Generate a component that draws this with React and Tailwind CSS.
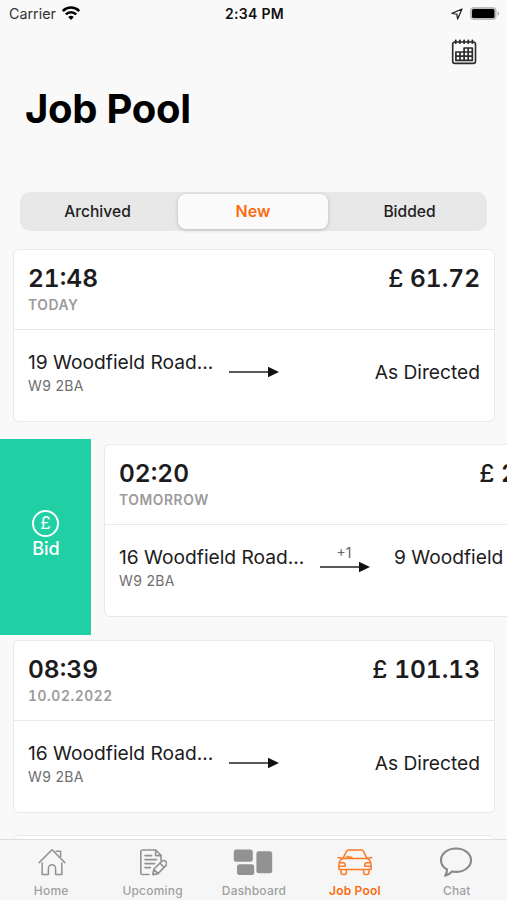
import React from 'react';

function StatusBar() {
  return (
    <div className="flex h-[28px] shrink-0 items-center justify-between pl-[9px] pr-[7px] text-[14px] text-[#111]">
      <div className="flex w-[150px] items-center gap-[6px]">
        <span className="text-[14.3px] text-[#333]">Carrier</span>
        <svg className="mt-[-2px]" width="18" height="14" viewBox="0 0 18 14" fill="none" stroke="#000" strokeWidth="2.5">
          <path d="M0.8 5a11.600 11.600 0 0 1 16.400 0" />
          <path d="M3.800 8.400a7.300 7.300 0 0 1 10.400 0" />
          <path d="M9 14L6.200 11a4 4 0 0 1 5.600 0z" fill="#000" stroke="none" />
        </svg>
      </div>
      <span className="mt-[-2px] text-[14px] font-semibold tracking-[0.3px]">2:34 PM</span>
      <div className="flex w-[150px] items-center justify-end gap-[6px]">
        <svg width="12" height="12" viewBox="0 0 12 12" fill="none" stroke="#222" strokeWidth="1.3" strokeLinejoin="round">
          <path d="M11 1L1 5.400l4.800.8L6.600 11z" />
        </svg>
        <svg className="mt-[-2px]" width="31" height="15" viewBox="0 0 31 15">
          <rect x="1" y="0.9" width="26.6" height="13" rx="4" fill="#bdbdbd" />
          <rect x="3" y="3" width="22.4" height="9" rx="1.6" fill="#000" />
          <path d="M28.600 5.200a2.500 2.500 0 0 1 0 4.600z" fill="#aaa" />
        </svg>
      </div>
    </div>
  );
}

function CalendarIcon() {
  return (
    <svg width="26" height="26" viewBox="0 0 26 26" fill="none" stroke="#2b2b2b">
      <rect x="1.7" y="3" width="22.8" height="21.4" rx="2.2" strokeWidth="1.6" />
      <path d="M4.700 1.400v2.600M8.900 1.400v2.600M13.100 1.400v2.600M17.300 1.400v2.600M21.400 1.400v2.600" strokeWidth="1.9" strokeLinecap="round" />
      <path d="M4.900 13h8.200V9h8.200v12.400H4.900zM4.900 17.200h16.400M13.100 13h8.200M9 13v8.400M13.100 13v8.400M17.200 9v12.400" strokeWidth="1.7" strokeLinejoin="round" />
    </svg>
  );
}

function SegmentedControl() {
  return (
    <div className="mx-[20px] flex h-[39px] shrink-0 items-stretch rounded-[10px] bg-[#e8e8e8] p-[2px] text-[15.6px] font-medium text-[#222]">
      <div className="flex w-[151px] items-center justify-center">Archived</div>
      <div className="ml-[5px] flex w-[150px] items-center justify-center rounded-[8px] bg-[#fafafa] pb-px text-[16px] font-semibold text-[#fb6d10] shadow-[0_1px_4px_rgba(0,0,0,0.2)]">
        New
      </div>
      <div className="ml-[6px] flex w-[151px] items-center justify-center">Bidded</div>
    </div>
  );
}

function Arrow() {
  return (
    <svg width="50" height="12" viewBox="0 0 50 12">
      <path d="M0 6h40" stroke="#222" strokeWidth="1.3" />
      <path d="M39 0.700L50 6l-11 5.300z" fill="#111" />
    </svg>
  );
}

function JobCard({ time, day, price, from, to, stops }) {
  return (
    <div className="flex h-[173px] w-[482px] shrink-0 flex-col rounded-[6px] border-[1.5px] border-[#e9e9e9] bg-white text-[#1c1c1e]">
      <div className="flex h-[80px] shrink-0 justify-between border-b-[1.5px] border-[#e9e9e9] px-[14px] pt-[14px]">
        <div className="flex flex-col">
          <span className="text-[24.5px] leading-[29px] font-semibold tabular-nums">{time}</span>
          <span className="mt-[4px] text-[13.8px] leading-[16px] font-semibold tracking-[0.6px] text-[#9b9b9b] tabular-nums">{day}</span>
        </div>
        <span className="text-[24.5px] leading-[29px] font-semibold whitespace-nowrap tabular-nums">
          <span className="font-medium">£</span> {price}
        </span>
      </div>
      <div className="flex px-[14px] pt-[19px] whitespace-nowrap">
        <div className="flex w-[201px] shrink-0 flex-col">
          <span className="text-[19.2px] leading-[26px]">{from}</span>
          <span className="mt-[2px] text-[14px] leading-[18px] tracking-[0.35px] text-[#6e6e6e]">W9 2BA</span>
        </div>
        <div className="flex w-[50px] shrink-0 flex-col items-center">
          <span className="mr-[2px] h-[17px] text-[14px] leading-[17px] text-[#666]">{stops}</span>
          <Arrow />
        </div>
        {stops ? (
          <span className="ml-[24px] text-[19.2px] leading-[26px]">{to}</span>
        ) : (
          <span className="ml-auto pt-[10px] text-[19.2px] leading-[26px]">{to}</span>
        )}
      </div>
    </div>
  );
}

function BidAction() {
  return (
    <div className="flex w-[91px] shrink-0 flex-col items-center justify-center bg-[#20cfa3] text-white">
      <div className="mt-[-4px] flex h-[27px] w-[27px] items-center justify-center rounded-full border-2 border-white text-[17px] leading-none">£</div>
      <span className="mt-px ml-px text-[18px] leading-[22px] font-medium">Bid</span>
    </div>
  );
}

function HomeIcon() {
  return (
    <svg className="ml-[2px]" width="28" height="28" viewBox="0 0 28 28" fill="none" stroke="#929292" strokeWidth="1.5" strokeLinecap="round" strokeLinejoin="round">
      <path d="M1.200 14.600L14 1.800l12.800 12.800" />
      <path d="M18 3.200h4.600v5.200" />
      <path d="M4.200 15v11.600h6.200v-6.200a3.600 3.600 0 0 1 7.200 0v6.200h6.200V15" />
    </svg>
  );
}

function UpcomingIcon() {
  return (
    <svg className="ml-[2px]" width="28" height="28" viewBox="0 0 28 28" fill="none" stroke="#929292" strokeWidth="1.6" strokeLinecap="round" strokeLinejoin="round">
      <path d="M10 26.500H3.600a1.800 1.800 0 0 1-1.800-1.800V3.800A1.800 1.800 0 0 1 3.600 2h13l5.400 5.400v4.800" />
      <path d="M16.600 2.200v5.400H22" />
      <path d="M6 7.600h6.600M6 11.600h11.600M6 15.600h9.600M6 19.600h5.400" />
      <path d="M13.800 26.600l1-5.400 7.800-7.800a2.900 2.900 0 0 1 4.200 4.200l-7.800 8zM21 15.200l4 4M14.800 21.400l4 4" />
    </svg>
  );
}

function DashboardIcon() {
  return (
    <svg width="40" height="28" viewBox="0 0 40 28" fill="#929292">
      <rect x="0.8" y="1.5" width="19" height="12.2" rx="2.5" />
      <rect x="4" y="16.3" width="17.2" height="10.7" rx="2.5" />
      <rect x="23.4" y="3.3" width="15.8" height="22" rx="2.5" />
    </svg>
  );
}

function CarIcon() {
  return (
    <svg width="36" height="28" viewBox="0 0 36 28" fill="none" stroke="#fb7a26" strokeWidth="1.5" strokeLinecap="round" strokeLinejoin="round">
      <path d="M6 10.400L9.600 3.200a2 2 0 0 1 1.800-1.200h13.200a2 2 0 0 1 1.800 1.200l3.600 7.200z" />
      <path d="M6 10.400c-2.600 1.400-4 3.400-4 6v5.200h32v-5.200c0-2.600-1.400-4.600-4-6" />
      <path d="M1.200 9.400l3.600.8M34.800 9.400l-3.600.8" />
      <path d="M9 10.200c.6-2.200 3-2.200 3.800-.6 1-.8 2.400-.2 2.600.8" />
      <path d="M2.800 14.800h3.400a2 2 0 0 1 2 2v1.400H2.200M33.200 14.800h-3.400a2 2 0 0 0-2 2v1.400h6" />
      <path d="M4 21.800v2.600a2 2 0 0 0 2 2h1.400a2 2 0 0 0 2-2v-2.600M26.600 21.800v2.600a2 2 0 0 0 2 2H30a2 2 0 0 0 2-2v-2.600" />
    </svg>
  );
}

function ChatIcon() {
  return (
    <svg width="34" height="30" viewBox="0 0 34 30" fill="none" stroke="#898989" strokeWidth="2.1" strokeLinejoin="round">
      <path d="M17 1.500c8.400 0 15 5.200 15 11.700s-6.600 11.700-15 11.700c-1.400 0-2.700-.1-4-.4-1.700 2-4 3.600-6.800 4.200 1.200-1.700 1.900-3.800 1.800-6.200C4.200 20.300 2 17.100 2 13.200 2 6.700 8.600 1.500 17 1.500z" />
    </svg>
  );
}

const tabs = [
  { label: 'Home', Icon: HomeIcon },
  { label: 'Upcoming', Icon: UpcomingIcon },
  { label: 'Dashboard', Icon: DashboardIcon },
  { label: 'Job Pool', Icon: CarIcon, active: true },
  { label: 'Chat', Icon: ChatIcon },
];

function TabBar() {
  return (
    <div className="grid h-[61px] shrink-0 grid-cols-5 border-t-[1.5px] border-[#dedede] bg-[#f6f6f6]">
      {tabs.map(({ label, Icon, active }) => (
        <div key={label} className="flex flex-col items-center">
          <div className="flex h-[44px] items-center justify-center">
            <Icon />
          </div>
          <span className={active ? 'text-[12px] leading-[14px] font-semibold tracking-[0.2px] text-[#fb6d10]' : 'pl-px text-[12px] leading-[14px] font-medium tracking-[0.2px] text-[#a0a0a0]'}>
            {label}
          </span>
        </div>
      ))}
    </div>
  );
}

export default function App() {
  return (
    <div className="flex h-[900px] w-[507px] flex-col overflow-hidden bg-[#f9f9f9] font-['Inter','Liberation_Sans',sans-serif]">
      <StatusBar />
      <div className="flex h-[50px] shrink-0 justify-end pt-[11px] pr-[30px]">
        <CalendarIcon />
      </div>
      <h1 className="ml-[25px] h-[114px] shrink-0 pt-[7px] text-[40px] leading-[48px] font-bold tracking-[-0.3px] text-black">Job Pool</h1>
      <SegmentedControl />
      <div className="flex min-h-0 flex-1 flex-col overflow-hidden pt-[13px]">
        <div className="flex h-[195px] shrink-0 pt-[5px] pl-[13px]">
          <JobCard time="21:48" day="TODAY" price="61.72" from="19 Woodfield Road..." to="As Directed" />
        </div>
        <div className="flex h-[196px] shrink-0">
          <BidAction />
          <div className="pt-[5px] pl-[13px]">
            <JobCard time="02:20" day="TOMORROW" price="24.30" from="16 Woodfield Road..." to="9 Woodfield" stops="+1" />
          </div>
        </div>
        <div className="flex h-[195px] shrink-0 pt-[5px] pl-[13px]">
          <JobCard time="08:39" day="10.02.2022" price="101.13" from="16 Woodfield Road..." to="As Directed" />
        </div>
        <div className="flex h-[195px] shrink-0 pt-[5px] pl-[13px]">
          <div className="h-[173px] w-[482px] rounded-[6px] border-[1.5px] border-[#e9e9e9] bg-white" />
        </div>
      </div>
      <TabBar />
    </div>
  );
}
